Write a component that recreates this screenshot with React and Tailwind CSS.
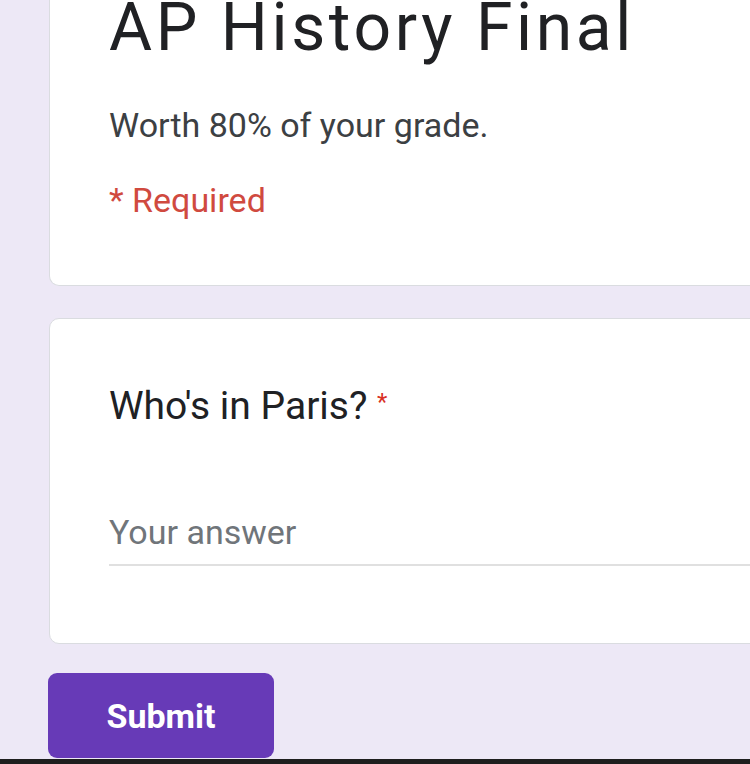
export default function App() {
  return (
    <div
      className="relative h-[764px] w-[750px] overflow-hidden bg-[#ede8f6]"
      style={{ fontFamily: 'Roboto, "Liberation Sans", sans-serif' }}
    >
      <div className="flex flex-col pl-[49px]">
        {/* header card, top is cut off by the screenshot */}
        <div className="-mr-[40px] rounded-b-[10px] border border-t-0 border-[#dadce0] bg-white pb-[65px] pl-[59px]">
          <h1 className="text-[66px] leading-[56px] tracking-[3.6px] text-[#202124]">AP History Final</h1>
          <p className="mt-[49px] text-[34px] leading-[40px] text-[#3c4043]">Worth 80% of your grade.</p>
          <p className="mt-[35px] text-[34px] leading-[40px] text-[#d04a3f]">* Required</p>
        </div>

        {/* question card */}
        <div className="-mr-[40px] mt-[32px] rounded-[10px] border border-[#dadce0] bg-white pb-[77px] pl-[59px] pt-[67px]">
          <p className="text-[39px] leading-[40px] text-[#202124]">
            Who's in Paris?{' '}
            <span className="relative -top-[9px] text-[24px] text-[#d93025]">*</span>
          </p>
          <div className="mt-[81px] border-b-2 border-[#e0e0e0] pb-[12px]">
            <span className="text-[34px] leading-[40px] text-[#70757a]">Your answer</span>
          </div>
        </div>

        <div className="mt-[29px]">
          <button className="h-[85px] w-[226px] -ml-px rounded-[9px] bg-[#673ab7] text-[34px] font-bold leading-[40px] text-white">
            Submit
          </button>
        </div>
      </div>
      <div className="absolute bottom-0 left-0 h-[5px] w-full bg-[#1e1e1e]" />
    </div>
  )
}
